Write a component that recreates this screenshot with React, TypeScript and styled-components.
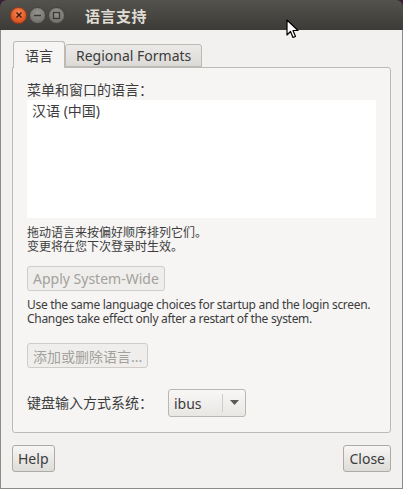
import styled, { createGlobalStyle } from 'styled-components';

const GlobalStyle = createGlobalStyle`
  html, body {
    margin: 0;
    padding: 0;
    background: #3b1f35;
  }
  * {
    box-sizing: border-box;
  }
`;

const FONT = `"Noto Sans", "Noto Sans CJK SC", sans-serif`;

const Window = styled.div`
  position: relative;
  display: flex;
  flex-direction: column;
  width: 403px;
  height: 489px;
  overflow: hidden;
  border-radius: 7px 7px 0 0;
  font-family: ${FONT};
  color: #3c3c3c;
`;

const TitleBar = styled.div`
  display: flex;
  align-items: center;
  height: 30px;
  padding-left: 10px;
  background: linear-gradient(#54524d, #3c3b37);
`;

const WindowButtons = styled.div`
  display: flex;
  gap: 2px;
  margin-right: 20px;
`;

const CircleButton = styled.div<{ $close?: boolean }>`
  display: flex;
  align-items: center;
  justify-content: center;
  width: 17px;
  height: 17px;
  border-radius: 50%;
  border: 1px solid ${(p) => (p.$close ? '#9b3a17' : '#45443f')};
  background: ${(p) =>
    p.$close
      ? 'radial-gradient(circle at 50% 35%, #f88a58, #df5a26 60%, #c4461b)'
      : 'radial-gradient(circle at 50% 35%, #97958f, #7b7974 60%, #64625d)'};
`;

const Title = styled.div`
  font-size: 15px;
  font-weight: bold;
  color: #dfdbd2;
  letter-spacing: 0.5px;
`;

const Body = styled.div`
  flex: 1;
  display: flex;
  flex-direction: column;
  padding: 11px 11px 0 11px;
  background: #f2f1f0;
  border: 1px solid #8d8b86;
  border-top: none;
`;

const Tabs = styled.div`
  display: flex;
  align-items: flex-end;
  height: 26px;
  padding-left: 1px;
`;

const Tab = styled.div<{ $active?: boolean }>`
  display: flex;
  align-items: center;
  justify-content: center;
  height: ${(p) => (p.$active ? '27px' : '23px')};
  padding: 0 ${(p) => (p.$active ? '11px' : '10px')};
  margin-bottom: ${(p) => (p.$active ? '-1px' : '0')};
  font-size: 14px;
  color: #3c3c3c;
  border: 1px solid #bdbab5;
  border-bottom: ${(p) => (p.$active ? 'none' : '1px solid #bdbab5')};
  border-radius: 3px 3px 0 0;
  background: ${(p) =>
    p.$active ? '#f6f5f4' : 'linear-gradient(#eceae8, #dcdad6)'};
  position: relative;
  z-index: ${(p) => (p.$active ? 1 : 0)};
`;

const Panel = styled.div`
  display: flex;
  flex-direction: column;
  height: 366px;
  padding: 13px 14px 0 14px;
  background: #f6f5f4;
  border: 1px solid #bdbab5;
  border-radius: 0 3px 3px 3px;
`;

const Label = styled.div`
  font-size: 14px;
  line-height: 18px;
  white-space: nowrap;
`;

const LanguageList = styled.div`
  height: 118px;
  margin-top: 1px;
  padding: 2px 5px;
  background: #ffffff;
  font-size: 14px;
  line-height: 18px;
`;

const Hint = styled.div<{ $gap: number; $latin?: boolean }>`
  margin-top: ${(p) => p.$gap}px;
  font-size: 12px;
  line-height: 14px;
  white-space: nowrap;
  letter-spacing: ${(p) => (p.$latin ? '-0.3px' : '0')};
`;

const DisabledButton = styled.div<{ $gap: number }>`
  align-self: flex-start;
  display: flex;
  align-items: center;
  height: 25px;
  margin-top: ${(p) => p.$gap}px;
  padding: 0 5px;
  font-size: 14px;
  color: #a3a19d;
  border: 1px solid #cfccc7;
  border-radius: 3px;
  background: #efeeec;
  white-space: nowrap;
`;

const KeyboardRow = styled.div`
  display: flex;
  align-items: center;
  gap: 15px;
  margin-top: 21px;
`;

const Combo = styled.div`
  display: flex;
  align-items: stretch;
  width: 78px;
  height: 28px;
  border: 1px solid #bab7b2;
  border-radius: 3px;
  background: linear-gradient(#f8f7f6, #e9e7e4);
  font-size: 14px;
`;

const ComboValue = styled.div`
  flex: 1;
  display: flex;
  align-items: center;
  padding-left: 5px;
  border-right: 1px solid #d0cdc8;
  margin: 4px 0;
`;

const ComboArrow = styled.div`
  display: flex;
  align-items: center;
  justify-content: center;
  width: 22px;
`;

const Footer = styled.div`
  display: flex;
  justify-content: space-between;
  margin-top: 12px;
`;

const PushButton = styled.div`
  display: flex;
  align-items: center;
  height: 27px;
  padding: 0 5px;
  font-size: 14px;
  color: #3c3c3c;
  border: 1px solid #aeaba6;
  border-radius: 3px;
  background: linear-gradient(#f7f6f5, #dedcd8);
`;

const Cursor = styled.svg`
  position: absolute;
  left: 286px;
  top: 19px;
`;

const App = () => {
  return (
    <>
      <GlobalStyle />
      <Window>
        <TitleBar>
          <WindowButtons>
            <CircleButton $close>
              <svg width="8" height="8" viewBox="0 0 8 8">
                <path d="M1.5 1.5 L6.5 6.5 M6.5 1.5 L1.5 6.5" stroke="#3a1a0d" strokeWidth="1.4" />
              </svg>
            </CircleButton>
            <CircleButton>
              <svg width="9" height="9" viewBox="0 0 9 9">
                <path d="M1 4.5 H8" stroke="#3a3935" strokeWidth="1.4" />
              </svg>
            </CircleButton>
            <CircleButton>
              <svg width="9" height="9" viewBox="0 0 9 9">
                <rect x="1.5" y="1.5" width="6" height="6" fill="none" stroke="#3a3935" strokeWidth="1.3" />
              </svg>
            </CircleButton>
          </WindowButtons>
          <Title>语言支持</Title>
        </TitleBar>
        <Body>
          <Tabs>
            <Tab $active>语言</Tab>
            <Tab>Regional Formats</Tab>
          </Tabs>
          <Panel>
            <Label>菜单和窗口的语言：</Label>
            <LanguageList>汉语 (中国)</LanguageList>
            <Hint $gap={8}>
              拖动语言来按偏好顺序排列它们。
              <br />
              变更将在您下次登录时生效。
            </Hint>
            <DisabledButton $gap={12}>Apply System-Wide</DisabledButton>
            <Hint $gap={7} $latin>
              Use the same language choices for startup and the login screen.
              <br />
              Changes take effect only after a restart of the system.
            </Hint>
            <DisabledButton $gap={17}>添加或删除语言...</DisabledButton>
            <KeyboardRow>
              <Label>键盘输入方式系统：</Label>
              <Combo>
                <ComboValue>ibus</ComboValue>
                <ComboArrow>
                  <svg width="9" height="6" viewBox="0 0 9 6">
                    <path d="M0 0 H9 L4.5 5 Z" fill="#5a5955" />
                  </svg>
                </ComboArrow>
              </Combo>
            </KeyboardRow>
          </Panel>
          <Footer>
            <PushButton>Help</PushButton>
            <PushButton>Close</PushButton>
          </Footer>
        </Body>
        <Cursor width="13" height="20" viewBox="0 0 13 20">
          <path
            d="M1 1 L1 16 L4.5 12.5 L7 18.5 L9.5 17.5 L7 11.5 L12 11.5 Z"
            fill="#ffffff"
            stroke="#000000"
            strokeWidth="1.2"
            strokeLinejoin="round"
          />
        </Cursor>
      </Window>
    </>
  );
};

export default App;
